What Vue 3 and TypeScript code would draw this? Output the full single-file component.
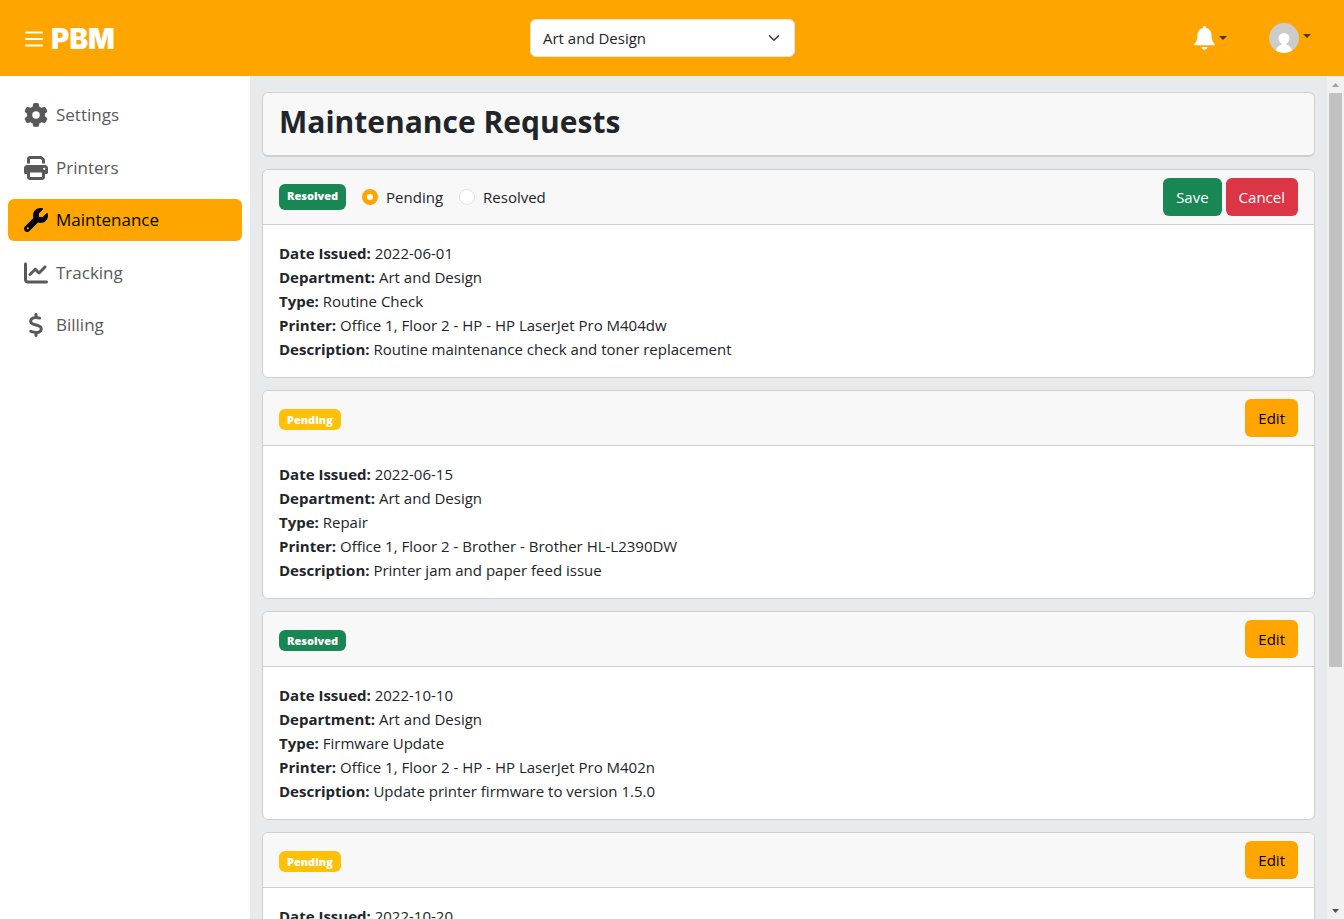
<script setup lang="ts">
import { ref } from 'vue'

interface NavItem {
  label: string
  box: string
  path: string
  active?: boolean
}
interface Request {
  status: 'Pending' | 'Resolved'
  editing: boolean
  details: [string, string][]
}

const nav: NavItem[] = [
  {
    label: 'Settings',
    box: '0 0 512 512',
    path: 'M495.9 166.6c3.2 8.7 .5 18.4-6.4 24.6l-43.3 39.4c1.1 8.3 1.7 16.8 1.7 25.4s-.6 17.1-1.7 25.4l43.3 39.4c6.9 6.2 9.6 15.9 6.4 24.6c-4.4 11.9-9.7 23.3-15.8 34.3l-4.7 8.1c-6.6 11-14 21.4-22.1 31.2c-5.9 7.2-15.7 9.6-24.5 6.8l-55.7-17.7c-13.4 10.3-28.2 18.9-44 25.4l-12.5 57.1c-2 9.1-9 16.3-18.2 17.8c-13.8 2.3-28 3.5-42.5 3.5s-28.7-1.2-42.5-3.5c-9.2-1.5-16.2-8.7-18.2-17.8l-12.5-57.1c-15.8-6.5-30.6-15.1-44-25.4L83.1 425.9c-8.8 2.8-18.6 .3-24.5-6.8c-8.1-9.8-15.5-20.2-22.1-31.2l-4.7-8.1c-6.1-11-11.4-22.4-15.8-34.3c-3.2-8.7-.5-18.4 6.4-24.6l43.3-39.4C64.6 273.1 64 264.6 64 256s.6-17.1 1.7-25.4L22.4 191.2c-6.9-6.2-9.6-15.9-6.4-24.6c4.4-11.9 9.7-23.3 15.8-34.3l4.7-8.1c6.6-11 14-21.4 22.1-31.2c5.9-7.2 15.7-9.6 24.5-6.8l55.7 17.7c13.4-10.3 28.2-18.9 44-25.4l12.5-57.1c2-9.1 9-16.3 18.2-17.8C227.3 1.2 241.5 0 256 0s28.7 1.2 42.5 3.5c9.2 1.5 16.2 8.7 18.2 17.8l12.5 57.1c15.8 6.5 30.6 15.1 44 25.4l55.7-17.7c8.8-2.8 18.6-.3 24.5 6.8c8.1 9.8 15.5 20.2 22.1 31.2l4.7 8.1c6.1 11 11.4 22.4 15.8 34.3zM256 336a80 80 0 1 0 0-160 80 80 0 1 0 0 160z',
  },
  {
    label: 'Printers',
    box: '0 0 512 512',
    path: 'M128 0C92.7 0 64 28.7 64 64v96h64V64H354.7L384 93.3V160h64V93.3c0-17-6.7-33.3-18.7-45.3L400 18.7C388 6.7 371.7 0 354.7 0H128zM384 352v32 64H128V384 368 352H384zm64 32h32c17.7 0 32-14.3 32-32V256c0-35.3-28.7-64-64-64H64c-35.3 0-64 28.7-64 64v96c0 17.7 14.3 32 32 32H64v64c0 35.3 28.7 64 64 64H384c35.3 0 64-28.7 64-64V384zM432 248a24 24 0 1 1 0 48 24 24 0 1 1 0-48z',
  },
  {
    label: 'Maintenance',
    box: '0 0 512 512',
    active: true,
    path: 'M352 320c88.4 0 160-71.6 160-160c0-15.3-2.2-30.1-6.2-44.2c-3.1-10.8-16.4-13.2-24.3-5.3l-76.8 76.8c-3 3-7.1 4.7-11.3 4.7H336c-8.8 0-16-7.2-16-16V118.6c0-4.2 1.7-8.3 4.7-11.3l76.8-76.8c7.9-7.9 5.4-21.2-5.3-24.3C382.1 2.2 367.3 0 352 0C263.6 0 192 71.6 192 160c0 19.1 3.4 37.5 9.5 54.5L19.9 396.1C7.2 408.8 0 426.1 0 444.1C0 481.6 30.4 512 67.9 512c18 0 35.3-7.2 48-19.9L297.5 310.5c17 6.2 35.4 9.5 54.5 9.5zM80 408a24 24 0 1 1 0 48 24 24 0 1 1 0-48z',
  },
  {
    label: 'Tracking',
    box: '0 0 512 512',
    path: 'M64 64c0-17.7-14.3-32-32-32S0 46.3 0 64V400c0 44.2 35.8 80 80 80H480c17.7 0 32-14.3 32-32s-14.3-32-32-32H80c-8.8 0-16-7.2-16-16V64zm406.6 86.6c12.5-12.5 12.5-32.8 0-45.3s-32.8-12.5-45.3 0L320 210.7l-57.4-57.4c-12.5-12.5-32.8-12.5-45.3 0l-112 112c-12.5 12.5-12.5 32.8 0 45.3s32.8 12.5 45.3 0L240 221.3l57.4 57.4c12.5 12.5 32.8 12.5 45.3 0l128-128z',
  },
  {
    label: 'Billing',
    box: '0 0 320 512',
    path: 'M160 0c17.7 0 32 14.3 32 32V67.7c1.6 .2 3.1 .4 4.7 .7c.4 .1 .7 .1 1.1 .2l48 8.8c17.4 3.2 28.9 19.9 25.7 37.2s-19.9 28.9-37.2 25.7l-47.5-8.7c-31.3-4.6-58.9-1.5-78.3 6.2s-27.2 18.3-29 28.1c-2 10.7-.5 16.7 1.2 20.4c1.8 3.9 5.5 8.3 12.8 13.2c16.3 10.7 41.3 17.7 73.7 26.3l2.9 .8c28.6 7.6 63.6 16.8 89.6 33.8c14.2 9.3 27.6 21.9 35.9 39.5c8.5 17.9 10.3 37.9 6.4 59.2c-6.9 38-33.1 63.4-65.6 76.7c-13.7 5.6-28.6 9.2-44.4 11V480c0 17.7-14.3 32-32 32s-32-14.3-32-32V445.1c-.4-.1-.9-.1-1.3-.2l-.2 0 0 0c-24.4-3.8-64.5-14.3-91.5-26.3c-16.1-7.2-23.4-26.1-16.2-42.2s26.1-23.4 42.2-16.2c20.9 9.3 55.3 18.5 75.2 21.6c31.9 4.7 58.2 2 76-5.3c16.9-6.9 24.6-16.9 26.8-28.9c1.9-10.6 .4-16.7-1.3-20.4c-1.9-4-5.6-8.4-13-13.3c-16.4-10.7-41.5-17.7-74-26.3l-2.8-.7 0 0C119.4 279.3 84.4 270 58.4 253c-14.2-9.3-27.5-22-35.8-39.6c-8.4-17.9-10.1-37.9-6.1-59.2C23.7 116 52.3 91.2 84.8 78.3c13.3-5.3 27.9-8.9 43.2-11V32c0-17.7 14.3-32 32-32z',
  },
]

const department = ref('Art and Design')
const choice = ref('Pending')

const requests = ref<Request[]>([
  {
    status: 'Resolved',
    editing: true,
    details: [
      ['Date Issued', '2022-06-01'],
      ['Department', 'Art and Design'],
      ['Type', 'Routine Check'],
      ['Printer', 'Office 1, Floor 2 - HP - HP LaserJet Pro M404dw'],
      ['Description', 'Routine maintenance check and toner replacement'],
    ],
  },
  {
    status: 'Pending',
    editing: false,
    details: [
      ['Date Issued', '2022-06-15'],
      ['Department', 'Art and Design'],
      ['Type', 'Repair'],
      ['Printer', 'Office 1, Floor 2 - Brother - Brother HL-L2390DW'],
      ['Description', 'Printer jam and paper feed issue'],
    ],
  },
  {
    status: 'Resolved',
    editing: false,
    details: [
      ['Date Issued', '2022-10-10'],
      ['Department', 'Art and Design'],
      ['Type', 'Firmware Update'],
      ['Printer', 'Office 1, Floor 2 - HP - HP LaserJet Pro M402n'],
      ['Description', 'Update printer firmware to version 1.5.0'],
    ],
  },
  {
    status: 'Pending',
    editing: false,
    details: [['Date Issued', '2022-10-20']],
  },
])
</script>

<template>
  <div class="app">
    <header class="topbar">
      <div class="brand">
        <button class="icon-btn" type="button" aria-label="Toggle menu">
          <svg width="18" height="16" viewBox="0 0 18 16">
            <path d="M1 1.5h16M1 8h16M1 14.5h16" stroke="#fff" stroke-width="2" stroke-linecap="round" />
          </svg>
        </button>
        <span class="logo">PBM</span>
      </div>
      <div class="picker">
        <select v-model="department" aria-label="Department">
          <option>Art and Design</option>
        </select>
        <svg class="chevron" width="12" height="12" viewBox="0 0 16 16">
          <path d="m2 5 6 6 6-6" fill="none" stroke="#343a40" stroke-width="2" stroke-linecap="round" stroke-linejoin="round" />
        </svg>
      </div>
      <div class="tools">
        <button class="icon-btn" type="button" aria-label="Notifications">
          <svg width="21" height="24" viewBox="0 0 21 24">
            <path d="M10.5 0c.9 0 1.500.6 1.500 1.500v.5c3.400.7 5.300 3.200 5.500 6.500.2 5 .8 7 2.900 9.100.8.8.5 1.700-.5 1.700H1.100c-1 0-1.300-.9-.5-1.700C2.700 15.500 3.300 13.500 3.500 8.500 3.700 5.200 5.600 2.700 9 2v-.5C9 .6 9.600 0 10.500 0zM7.500 21h6c-.4 1.800-1.400 2.700-3 2.700s-2.600-.9-3-2.700z" fill="#fff" />
          </svg>
          <span class="caret"></span>
        </button>
        <button class="icon-btn account" type="button" aria-label="Account">
          <svg width="30" height="30" viewBox="0 0 30 30">
            <clipPath id="avatar"><circle cx="15" cy="15" r="15" /></clipPath>
            <g clip-path="url(#avatar)">
              <path d="M0 0h30v30H0z" fill="#ccc" />
              <circle cx="15" cy="15.500" r="5.500" fill="#fff" />
              <path d="M12.500 19h5v3c3.500.7 5.500 3 6 8h-17c.5-5 2.500-7.300 6-8z" fill="#fff" />
            </g>
          </svg>
          <span class="caret"></span>
        </button>
      </div>
    </header>

    <div class="body">
      <div class="sidebar">
        <nav>
          <a v-for="item in nav" :key="item.label" href="#" :class="{ active: item.active }">
            <svg width="24" height="24" :viewBox="item.box"><path :d="item.path" fill="currentColor" /></svg>
            <span>{{ item.label }}</span>
          </a>
        </nav>
      </div>

      <main class="content">
        <div class="title-card"><h1>Maintenance Requests</h1></div>

        <article v-for="(r, i) in requests" :key="i" class="card">
          <div class="card-head">
            <div class="state">
              <span class="badge" :class="[r.status.toLowerCase(), { tall: r.editing }]">{{ r.status }}</span>
              <template v-if="r.editing">
                <label><input v-model="choice" type="radio" name="status" value="Pending" />Pending</label>
                <label><input v-model="choice" type="radio" name="status" value="Resolved" />Resolved</label>
              </template>
            </div>
            <div class="actions">
              <template v-if="r.editing">
                <button class="btn save" type="button">Save</button>
                <button class="btn cancel" type="button">Cancel</button>
              </template>
              <button v-else class="btn edit" type="button">Edit</button>
            </div>
          </div>
          <div class="card-body">
            <p v-for="[name, value] in r.details" :key="name"><strong>{{ name }}:</strong> {{ value }}</p>
          </div>
        </article>
      </main>

      <div class="scrollbar" aria-hidden="true">
        <svg width="17" height="17" viewBox="0 0 17 17"><path d="M5 11h7L8.500 7z" fill="#a3a3a3" /></svg>
        <div class="track"><div class="thumb"></div></div>
        <svg width="17" height="17" viewBox="0 0 17 17"><path d="M5 7h7l-3.500 4z" fill="#505050" /></svg>
      </div>
    </div>
  </div>
</template>

<style>
body {
  margin: 0;
  overflow: hidden;
}
</style>

<style scoped>
.app {
  display: flex;
  flex-direction: column;
  height: 100vh;
  font-family: "Segoe UI", "Open Sans", sans-serif;
  font-size: 15px;
  line-height: 24px;
  color: #212529;
}
.app * {
  box-sizing: border-box;
}
button,
select {
  font: inherit;
  color: inherit;
}
.topbar {
  flex: none;
  display: grid;
  grid-template-columns: 1fr 265px 1fr;
  align-items: center;
  height: 76px;
  padding: 0 33px 0 14px;
  background: #ffa500;
}
.brand,
.tools,
.icon-btn {
  display: flex;
  align-items: center;
}
.brand {
  gap: 8px;
  padding: 2px 0 0 11px;
}
.tools {
  justify-content: flex-end;
  gap: 42px;
}
.icon-btn {
  gap: 4px;
  padding: 0;
  border: 0;
  background: none;
}
.caret {
  border: 4px solid transparent;
  border-top-color: #4d3a12;
  border-bottom: 0;
}
.account .caret {
  margin-bottom: 4px;
}
.logo {
  font: 900 28px/36px Inter, sans-serif;
  color: #fff;
}
.picker {
  position: relative;
}
.picker select {
  display: block;
  width: 100%;
  height: 38px;
  padding: 0 36px 0 12px;
  border: 1px solid #dee2e6;
  border-radius: 6px;
  background: #fff;
  appearance: none;
}
.chevron {
  position: absolute;
  top: 13px;
  right: 15px;
  pointer-events: none;
}
.body {
  flex: 1;
  display: flex;
  min-height: 0;
}
.sidebar {
  flex: none;
  width: 250px;
  padding: 18px 8px;
  background: #fff;
}
nav {
  display: flex;
  flex-direction: column;
  justify-content: space-between;
  height: 252px;
}
nav a {
  display: flex;
  align-items: center;
  gap: 8px;
  height: 42px;
  padding: 0 16px;
  border-radius: 6px;
  font-size: 17px;
  color: #595959;
  text-decoration: none;
}
nav a.active {
  background: #ffa500;
  color: #000;
}
.content {
  flex: 1;
  display: flex;
  flex-direction: column;
  gap: 12px;
  min-width: 0;
  padding: 16px 12px;
  overflow: hidden;
  background: #e8ebee;
}
.title-card {
  flex: none;
  height: 65px;
  padding: 5px 16px;
  border: 1px solid #cfcfd0;
  border-bottom-width: 2px;
  border-radius: 6px;
  background: #f8f8f8;
}
h1 {
  margin: 0;
  font-size: 30px;
  line-height: 48px;
  font-weight: 700;
}
.card {
  flex: none;
  border: 1px solid #cfcfd0;
  border-radius: 6px;
  background: #fff;
  overflow: hidden;
}
.card-head {
  display: flex;
  justify-content: space-between;
  align-items: center;
  padding: 8px 16px;
  border-bottom: 1px solid #cfcfd0;
  background: #f8f8f8;
}
.state,
.actions {
  display: flex;
  align-items: center;
}
.state {
  gap: 16px;
}
.actions {
  gap: 4px;
}
.badge {
  margin-top: 2px;
  padding: 4px 8px;
  border-radius: 6px;
  font-size: 11px;
  line-height: 13px;
  font-weight: 800;
  color: #fff;
}
.badge.tall {
  margin-top: 0;
  padding: 5px 8px 8px;
}
.badge.resolved {
  background: #198754;
}
.badge.pending {
  background: #ffc107;
}
label {
  display: flex;
  align-items: center;
  gap: 8px;
}
input[type='radio'] {
  width: 16px;
  height: 16px;
  margin: 0;
  border: 1px solid #dee2e6;
  border-radius: 50%;
  background: #fff;
  appearance: none;
}
input[type='radio']:checked {
  border: 5px solid #ffa500;
}
.btn {
  height: 38px;
  padding: 0 13px;
  border: 0;
  border-radius: 6px;
  color: #fff;
}
.save {
  background: #198754;
}
.cancel {
  background: #dc3545;
}
.edit {
  background: #ffa500;
  color: #000;
}
.card-body {
  padding: 16px;
}
.card-body p {
  margin: 0;
}
.scrollbar {
  flex: none;
  display: flex;
  flex-direction: column;
  width: 17px;
  background: #f1f1f1;
}
.track {
  flex: 1;
  padding: 0 2px;
}
.thumb {
  height: 71%;
  background: #c1c1c1;
}
</style>
